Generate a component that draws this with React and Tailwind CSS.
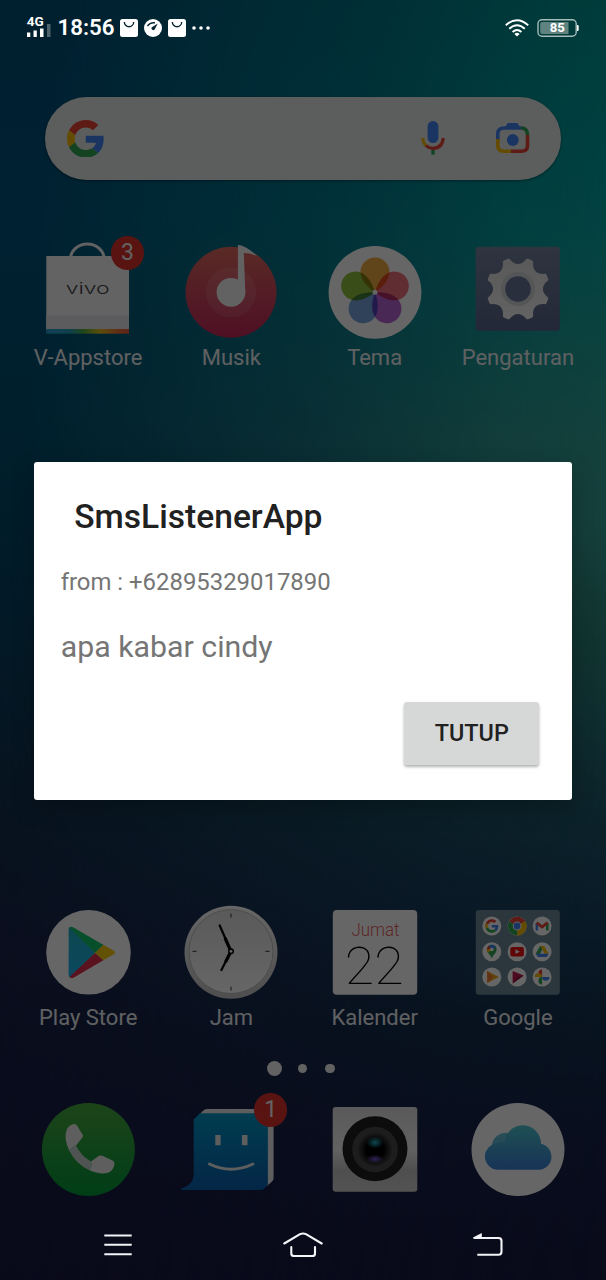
import React from "react";

const G_PARTS = [
  ["#EA4335", "M24 9.5c3.54 0 6.71 1.22 9.21 3.6l6.85-6.85C35.9 2.38 30.47 0 24 0 14.62 0 6.51 5.38 2.56 13.22l7.98 6.19C12.43 13.72 17.74 9.5 24 9.5z"],
  ["#4285F4", "M46.98 24.55c0-1.57-.15-3.09-.38-4.55H24v9.02h12.94c-.58 2.96-2.26 5.48-4.78 7.18l7.73 6c4.51-4.18 7.09-10.36 7.09-17.65z"],
  ["#FBBC05", "M10.53 28.59c-.48-1.45-.76-2.99-.76-4.59s.27-3.14.76-4.59l-7.98-6.19C.92 16.46 0 20.12 0 24c0 3.88.92 7.54 2.56 10.78l7.97-6.19z"],
  ["#34A853", "M24 48c6.48 0 11.93-2.13 15.89-5.81l-7.73-6c-2.15 1.45-4.92 2.3-8.16 2.3-6.26 0-11.57-4.22-13.47-9.91l-7.98 6.19C6.51 42.62 14.62 48 24 48z"],
];

const GMark = () => G_PARTS.map(([fill, d]) => <path key={fill} fill={fill} d={d} />);

function Gradient({ id, from, to }) {
  return (
    <linearGradient id={id} x1="0" y1="0" x2="0" y2="1">
      <stop offset="0" stopColor={from} />
      <stop offset="1" stopColor={to} />
    </linearGradient>
  );
}

// Eight teeth joined by concave valleys.
function gearPath(radius, valley) {
  const at = (r, deg) => {
    const a = (deg * Math.PI) / 180;
    return `${(r * Math.sin(a)).toFixed(2)} ${(-r * Math.cos(a)).toFixed(2)}`;
  };
  let d = "";
  for (let k = 0; k < 8; k++) {
    const t = 22.5 + 45 * k;
    d += `${k ? "L" : "M"}${at(radius - 1, t - 7)} Q${at(radius, t - 6)} ${at(radius, t - 4)} L${at(radius, t + 4)} Q${at(radius, t + 6)} ${at(radius - 1, t + 7)} C${at(valley, t + 14)} ${at(valley, t + 31)} ${at(radius - 1, t + 38)} `;
  }
  return d + "Z";
}

function StoreIcon() {
  return (
    <>
      <defs>
        <linearGradient id="rainbow">
          <stop offset="0" stopColor="#2aa0d8" />
          <stop offset="0.3" stopColor="#2aa0b8" />
          <stop offset="0.45" stopColor="#50b040" />
          <stop offset="0.65" stopColor="#e8c020" />
          <stop offset="0.85" stopColor="#f07838" />
          <stop offset="1" stopColor="#e85838" />
        </linearGradient>
      </defs>
      <path d="M-17.5 -31a16.8 15 0 0 1 33.6 0" fill="none" stroke="#f4f4f4" strokeWidth="3" />
      <rect x="-41.7" y="-34" width="82.7" height="74" fill="#f8f8fa" />
      <rect x="-41.7" y="25.5" width="82.7" height="14" fill="#e6e6ea" />
      <rect x="-41.7" y="39" width="82.7" height="4.7" fill="url(#rainbow)" />
      <text x="-22.3" y="4" fontSize="16.5" textLength="44" lengthAdjust="spacingAndGlyphs" fill="#444" className="font-[Inter,sans-serif] font-light">vivo</text>
    </>
  );
}

function MusicIcon() {
  return (
    <>
      <defs><Gradient id="music" from="#e06a60" to="#c4285a" /></defs>
      <circle cy="2.3" r="45.5" fill="url(#music)" />
      <circle cy="2.3" r="25" fill="#fff" fillOpacity="0.1" />
      <circle cy="2.3" r="14.4" fill="#f6f6f6" />
      <path d="M6.9 -45.3Q16 -44 26.6 -33.5Q19 -37.5 12.8 -37L14.3 2.3H6.9Z" fill="#f6f6f6" />
    </>
  );
}

function ThemeIcon() {
  const petals = ["#f2a533", "#ee6472", "#b458d4", "#6c9ee0", "#83bb2c"];
  return (
    <>
      <circle cy="2.3" r="46.4" fill="#fff" />
      <g transform="translate(0 2.3)">
        {petals.map((c, i) => (
          <path key={c} className="mix-blend-multiply" transform={`rotate(${i * 72})`} fill={c} fillOpacity="0.92"
            d="M0 0C-6.5 -4 -14.5 -12 -14.5 -20.3A14.5 14.5 0 0 1 14.5 -20.3C14.5 -12 6.5 -4 0 0Z" />
        ))}
        <circle r="2.5" fill="#fff" />
      </g>
    </>
  );
}

function GearIcon() {
  return (
    <>
      <defs>
        <Gradient id="gearBg" from="#76849f" to="#58658c" />
        <Gradient id="gearFg" from="#e0e0e2" to="#f6f6f6" />
      </defs>
      <rect x="-42.2" y="-43.3" width="84" height="84" rx="2.5" fill="url(#gearBg)" />
      <g transform="translate(0 -1)">
        <path d={gearPath(31.8, 23.6)} fill="url(#gearFg)" />
        <circle r="17" fill="#d2d4d8" />
        <circle r="12.8" fill="#67759a" />
      </g>
    </>
  );
}

function PlayIcon() {
  return (
    <>
      <defs><Gradient id="playBlue" from="#20b0c4" to="#20b4f0" /></defs>
      <circle cx="0.5" cy="2.3" r="42.3" fill="#fff" />
      <path d="M-19.4 -20.5Q-19 -24 -16 -22.5L7 3L-16 27.5Q-19.4 28 -19.4 25Z" fill="url(#playBlue)" />
      <path d="M-18.5 -22.5Q-17 -23.8 -14.5 -22.5L15.5 -5L7 3Z" fill="#12c46c" />
      <path d="M15.3 -5.2L26.3 1Q28 2.5 26.3 4L15.3 10.3L7 3Z" fill="#f8ca10" />
      <path d="M7 3L15.3 10.3L-14.5 27.8Q-17 28.8 -18.5 27Z" fill="#e0304c" />
    </>
  );
}

function ClockIcon() {
  return (
    <>
      <defs><Gradient id="clock" from="#e0e0e0" to="#ffffff" /><Gradient id="rim" from="#ffffff" to="#c4c4c4" /></defs>
      <circle cy="2.3" r="46.5" fill="url(#rim)" />
      <circle cy="1.5" r="42" fill="url(#clock)" stroke="#b4b4b4" strokeWidth="0.8" />
      <path d="M0 -36.5v4M0 36.5v4M-38.5 1.3h4M34.5 1.3h4" stroke="#555" strokeWidth="1.2" />
      <path d="M-11.3 -24.5L0 1.3L-9.6 20" fill="none" stroke="#000" strokeWidth="2.2" strokeLinecap="round" strokeLinejoin="round" />
      <path d="M-6 -12L0 1.3L-5.5 12" fill="none" stroke="#000" strokeWidth="3.2" strokeLinejoin="round" />
      <circle cy="1.3" r="3" fill="#000" />
      <circle cy="1.3" r="1.4" fill="#fff" />
    </>
  );
}

function CalendarIcon() {
  return (
    <>
      <rect x="-42.2" y="-40" width="84.4" height="84.7" rx="4" fill="#fff" />
      <text x="-23.5" y="-13.7" fontSize="19" textLength="48" lengthAdjust="spacingAndGlyphs" fill="#e8605c" className="font-light">Jumat</text>
      <text x="-30.2" y="33.6" fontSize="51" textLength="59" lengthAdjust="spacingAndGlyphs" fill="#000" className="font-thin">22</text>
    </>
  );
}

function FolderIcon() {
  const xs = [-26.2, -0.9, 24.1];
  const ys = [-24, 1.7, 27];
  const minis = [
    <g transform="translate(-6.7 -6.7) scale(0.28)"><GMark /></g>,
    <>
      <path d="M0 0L-8 -4.7A9.4 9.4 0 0 1 8.2 -4.7Z" fill="#ea4335" />
      <path d="M0 0L8.2 -4.7A9.4 9.4 0 0 1 0 9.4Z" fill="#fbbc05" />
      <path d="M0 0L0 9.4A9.4 9.4 0 0 1 -8 -4.7Z" fill="#34a853" />
      <circle r="4.4" fill="#fff" /><circle r="3.4" fill="#4285f4" />
    </>,
    <>
      <path d="M-5.2 4.5V-3" stroke="#4285f4" strokeWidth="2.6" />
      <path d="M5.2 4.5V-3" stroke="#34a853" strokeWidth="2.6" />
      <path d="M-5.4 -3.4L0 1L5.4 -3.4" fill="none" stroke="#ea4335" strokeWidth="2.8" />
    </>,
    <>
      <path d="M0 7C-1 3 -4.8 1.5 -4.8 -2.2A4.8 4.8 0 0 1 4.8 -2.2C4.8 1.5 1 3 0 7Z" fill="#34a853" />
      <path d="M-3.8 1A4.8 4.8 0 0 1 -3.6 -5.2L0 -2Z" fill="#fbbc05" />
      <path d="M-3.6 -5.3A4.8 4.8 0 0 1 4.2 -4.6L0 -1.5Z" fill="#4285f4" />
      <path d="M-4.7 -2A4.8 4.8 0 0 1 -3 -6L-1 -3Z" fill="#ea4335" />
      <circle cy="-2.2" r="1.8" fill="#fff" />
    </>,
    <><rect x="-6.8" y="-4.7" width="13.6" height="9.4" rx="2" fill="#f01010" /><path d="M-1.6 -2.4L2.6 0L-1.6 2.4Z" fill="#fff" /></>,
    <>
      <path d="M-2 -5.6H2L-3.4 4.8L-6.4 2Z" fill="#34a853" />
      <path d="M-1.8 -5.6H2L6.6 2H2.6Z" fill="#fbbc05" />
      <path d="M-6.4 2H6.6L4.6 5.2H-4.2Z" fill="#4285f4" />
    </>,
    <><path d="M-4.5 -6L7 0L-4.5 6Z" fill="#f5a820" /><path d="M-4.5 -6L1 0L-4.5 6Z" fill="#f07830" /></>,
    <><path d="M-4.5 -6L6.5 -1.5L-4.5 6.5Z" fill="#c01850" /><path d="M-4.5 6.5L1 0L6.5 -1.5Z" fill="#8a1040" /></>,
    <>
      <path d="M0 0V-7.4A3.7 3.7 0 0 1 0 0Z" transform="scale(-1 1)" fill="#ea4335" />
      <path d="M0 0H7.4A3.7 3.7 0 0 1 0 0Z" fill="#4285f4" />
      <path d="M0 0V-7.4A3.7 3.7 0 0 0 0 0Z" transform="scale(1 -1)" fill="#34a853" />
      <path d="M0 0H-7.4A3.7 3.7 0 0 1 0 0Z" fill="#fbbc05" />
    </>,
  ];
  return (
    <>
      <rect x="-42.2" y="-40" width="84" height="84.7" rx="3" fill="#6c8a98" />
      {minis.map((m, i) => (
        <g key={i} transform={`translate(${xs[i % 3]} ${ys[Math.floor(i / 3)]})`}>
          <circle r="9.5" fill="#fff" />
          {m}
        </g>
      ))}
    </>
  );
}

function PhoneIcon() {
  return (
    <>
      <defs><Gradient id="phone" from="#4bab40" to="#009a3a" /></defs>
      <circle cx="0.4" cy="-0.5" r="46.5" fill="url(#phone)" />
      <path d="M-13.5 -26Q-12 -26 -11 -24.5L-5.2 -15Q-4.5 -13.5 -6 -12L-12 -4.5Q-17 -3 -18.5 1Q-25 -12 -21 -21Q-18.5 -25.5 -13.5 -26Z" fill="#ececec" />
      <path d="M3 11.5L11 5.8Q13 5 15 6L24.5 10.5Q27 12 26.3 15Q25 21.5 19 23Q11 24.5 1 20Q4.5 17 3 11.5Z" fill="#ececec" />
      <path d="M-18.5 1Q-12 14 1 20Q4.5 17 3 11.5Q-7 6 -12 -4.5Q-17 -3 -18.5 1Z" fill="#c6d0cb" />
    </>
  );
}

function MessageIcon() {
  return (
    <>
      <defs><Gradient id="msg" from="#0098c8" to="#0b60b0" /></defs>
      <path d="M-24 -41H38Q42.6 -41 42.6 -36V28Q42.6 30 41 31.5L36 36V-36H-31Q-27 -41 -24 -41Z" fill="#ececec" />
      <path d="M-31 -36.7H36.9V35L31.5 40H-49.8V38.6Q-37.3 35 -37.3 24V-30.5Z" fill="url(#msg)" />
      <path d="M-15.7 -15h5.3v10.3h-5.3zM10.9 -15h5.6v10.3h-5.6z" fill="#ececec" />
      <path d="M-21.5 14Q0 24.5 22 14" fill="none" stroke="#ececec" strokeWidth="3" strokeLinecap="round" />
    </>
  );
}

function CameraIcon() {
  return (
    <>
      <defs>
        <linearGradient id="cam" x1="0" y1="0" x2="0" y2="1">
          <stop offset="0" stopColor="#e0e0e0" />
          <stop offset="0.5" stopColor="#f4f4f4" />
          <stop offset="0.75" stopColor="#c4c4c4" />
          <stop offset="1" stopColor="#d0d0d0" />
        </linearGradient>
        <radialGradient id="teal"><stop offset="0" stopColor="#28b8d0" /><stop offset="1" stopColor="#28b8d0" stopOpacity="0" /></radialGradient>
        <radialGradient id="violet"><stop offset="0" stopColor="#7a58d8" /><stop offset="1" stopColor="#7a58d8" stopOpacity="0" /></radialGradient>
        <radialGradient id="lens"><stop offset="0.5" stopColor="#000" /><stop offset="1" stopColor="#484848" /></radialGradient>
      </defs>
      <rect x="-42.3" y="-43" width="84.6" height="84.7" rx="3" fill="url(#cam)" />
      <circle cy="-1.3" r="32.5" fill="#1e1e1e" />
      <circle cy="-0.5" r="22.8" fill="#4a4a4a" />
      <circle cy="-0.5" r="17.5" fill="url(#lens)" />
      <ellipse cy="-7.5" rx="8.5" ry="6" fill="url(#teal)" />
      <ellipse cy="9" rx="8.5" ry="4.5" fill="url(#violet)" />
    </>
  );
}

function CloudIcon() {
  return (
    <>
      <defs>
        <linearGradient id="cloud" gradientUnits="userSpaceOnUse" x1="0" y1="-23" x2="0" y2="20">
          <stop offset="0" stopColor="#4cc4d0" />
          <stop offset="1" stopColor="#3c80d8" />
        </linearGradient>
      </defs>
      <circle cy="-0.5" r="46.5" fill="#fff" />
      <path d="M-21 19.8A13.3 13.3 0 0 1 -26 -5.2A13.8 13.8 0 0 1 -10 -17A18.2 18.2 0 0 1 23 -6.3A13.2 13.2 0 0 1 21 19.8Z" fill="url(#cloud)" />
      <path d="M-26 -5.2A13.8 13.8 0 0 1 -10 -17Q-13 -13 -13 -8Q-20 -8 -26 -5.2Z" fill="#fff" fillOpacity="0.14" />
    </>
  );
}

function AppTile({ icon: Icon, label, badge }) {
  return (
    <div className="relative flex flex-1 flex-col items-center">
      <svg width="100" height="110" viewBox="-50 -55 100 110" className="isolate overflow-visible">
        <Icon />
      </svg>
      {label && <span className="-mt-[1px] -mb-[1px] text-[22px] leading-7 whitespace-nowrap text-[#eef1f4]">{label}</span>}
      {badge && <Badge {...badge} />}
    </div>
  );
}

function Badge({ text, className }) {
  return (
    <span className={`absolute left-[94.3px] flex size-[33.4px] items-center justify-center rounded-full bg-[#de332e] text-[23px] leading-none text-[#f4f4f4] ${className}`}>
      {text}
    </span>
  );
}

function SearchBar() {
  return (
    <div className="mx-[45.3px] flex h-[82.5px] items-center rounded-full bg-[#e6ebea] pl-[21.5px] shadow-[0_1px_3px_rgba(0,0,0,0.4)]">
      <svg width="37.5" height="37.5" viewBox="0 0 48 48"><GMark /></svg>
      <svg width="36" height="36" viewBox="-18 -18 36 36" className="ml-auto">
        <rect x="-5.4" y="-17" width="10.8" height="22" rx="5.4" fill="#4285f4" />
        <path d="M0 10V16.7" stroke="#34a853" strokeWidth="3.4" />
        <path d="M-10.3 0Q-10 5.5 -6.5 8" fill="none" stroke="#fbbc05" strokeWidth="3.2" />
        <path d="M-7 7.6Q-4 10.3 0 10.3Q9.3 10 10.3 0" fill="none" stroke="#ea4335" strokeWidth="3.2" />
      </svg>
      <svg width="36" height="36" viewBox="-18 -18 36 36" className="mr-[29.5px] ml-[44.7px]" fill="none" strokeWidth="3.6">
        <path d="M-15.2 2V-4Q-15.2 -10 -9 -10H8" stroke="#4285f4" />
        <path d="M-8 -10L-5.5 -15H4.5L7.5 -10Z" fill="#4285f4" />
        <path d="M8 -10Q14.5 -10 14.5 -3" stroke="#34a853" />
        <path d="M14.5 -3V7.5Q14.5 13.3 8.5 13.3H-2" stroke="#ea4335" />
        <path d="M-2 13.3H-9Q-15.2 13.3 -15.2 7.5V1" stroke="#fbbc05" />
        <circle cx="-0.2" cy="2" r="5.9" fill="#4285f4" />
      </svg>
    </div>
  );
}

const BagGlyph = () => (
  <svg width="18" height="18" viewBox="0 0 18 18">
    <rect width="18" height="18" rx="2.5" fill="#fff" />
    <path d="M4.3 3A4.7 4.7 0 0 0 13.7 3" fill="none" stroke="#0a2634" strokeWidth="1.4" />
  </svg>
);

function StatusBar() {
  return (
    <div className="flex h-[55px] items-center pr-[27px] pl-[26px] text-white">
      <svg width="26" height="24" viewBox="0 0 26 24" fill="#fff">
        <text x="0.8" y="10" fontSize="12" textLength="17" lengthAdjust="spacingAndGlyphs" className="font-bold">4G</text>
        <path d="M1 16.5h3.3V21H1zM7.5 14.5h3.3V21H7.5zM14 12.5h3.5V21H14z" />
        <path d="M21 8h3.5v13H21z" fillOpacity="0.3" />
      </svg>
      <span className="ml-[5.5px] w-[56.5px] text-[22.3px] leading-none font-semibold">18:56</span>
      <div className="ml-[6px] flex items-center gap-[6px]">
        <BagGlyph />
        <svg width="18" height="18" viewBox="0 0 18 18">
          <circle cx="9" cy="9" r="9" fill="#fff" />
          <path d="M3.5 7Q6 3.2 11 3.8" fill="none" stroke="#0a2634" strokeWidth="1.4" />
          <path d="M13.8 4.5L10.5 10.8A2 2 0 0 1 7.5 8.6Z" fill="#0a2634" />
        </svg>
        <BagGlyph />
        <svg width="18" height="4" viewBox="0 0 18 4" fill="#fff">
          <circle cx="2" cy="2" r="1.8" /><circle cx="9" cy="2" r="1.8" /><circle cx="16" cy="2" r="1.8" />
        </svg>
      </div>
      <svg width="24" height="18" viewBox="0 0 24 18" className="ml-auto" fill="none" stroke="#fff" strokeWidth="1.9">
        <path d="M0.8 6.2Q12 -3.8 23.2 6.2M4.2 9.8Q12 2.8 19.8 9.8M7.6 13Q12 8.8 16.4 13" />
        <path d="M9.4 15L12 17.4L14.6 15Q12 12.6 9.4 15Z" fill="#fff" stroke="none" />
      </svg>
      <svg width="42" height="18" viewBox="0 0 42 18" className="ml-[8px]">
        <rect x="1" y="0.8" width="38.2" height="16.4" rx="4" fill="none" stroke="#a3bdba" strokeWidth="1.4" />
        <path d="M5 3H31.5V15H5Q3.2 15 3.2 13V5Q3.2 3 5 3Z" fill="#5f8480" />
        <path d="M40 6h.5q1.2 0 1.2 1v4q0 1-1.2 1H40z" fill="#fff" />
        <text x="12.7" y="13.4" fontSize="12.5" textLength="15" lengthAdjust="spacingAndGlyphs" fill="#fff" className="font-bold">85</text>
      </svg>
    </div>
  );
}

function Dialog() {
  return (
    <section className="mx-[33.7px] mt-[407px] flex h-[338px] flex-col rounded-[3px] bg-white pr-[33px] pl-[27px] shadow-[0_8px_22px_rgba(0,0,0,0.25)]">
      <h1 className="mt-[34px] ml-[13.5px] text-[33.6px] leading-[42px] font-medium text-[#212121]">SmsListenerApp</h1>
      <p className="mt-[29px] text-[23.9px] leading-[30px] text-[#757575]">from : +62895329017890</p>
      <p className="mt-[31px] text-[30.3px] leading-[38px] text-[#757575]">apa kabar cindy</p>
      <button className="mt-[36px] h-[63px] w-[135px] self-end rounded-[3px] bg-[#d6d8d7] text-[23.4px] leading-none font-medium text-[#212121] shadow-[0_2px_3px_rgba(0,0,0,0.3)]">
        TUTUP
      </button>
    </section>
  );
}

function NavBar() {
  return (
    <div className="mt-auto flex h-[70px] items-center pr-[103.5px] pl-[104.3px]">
      <svg width="28" height="24" viewBox="0 0 28 24" stroke="#f4f4f8" strokeWidth="2">
        <path d="M0.3 2.4h27.4M0.3 11.8h27.4M0.3 21.2h27.4" />
      </svg>
      <svg width="40" height="26" viewBox="0 0 40 26" fill="none" stroke="#f4f4f8" strokeWidth="2.1" strokeLinecap="round" strokeLinejoin="round" className="mb-[2px] ml-[151px]">
        <path d="M1.3 12.5L17 3.1Q20 1.8 23 3.1L38.7 12.5M8.3 16V22.5Q8.3 25 11 25H29.5Q32 25 32 22.5V16" />
      </svg>
      <svg width="30" height="24" viewBox="0 0 30 24" fill="none" stroke="#f4f4f8" strokeWidth="2.1" className="ml-auto">
        <path d="M1 5H25.5Q28.5 5 28.5 8V18.8Q28.5 21.8 25.5 21.8H4.3" />
        <path d="M0 4.6L8.8 0V5.6H0Z" fill="#f4f4f8" stroke="none" />
      </svg>
    </div>
  );
}

// Blue-to-navy on the left, with a teal-to-navy copy fading in from the right.
function Wallpaper() {
  return (
    <div className="absolute inset-0 bg-[linear-gradient(180deg,#005078_0%,#01547c_17%,#014e70_33%,#083f5e_50%,#12304e_62%,#1a234a_74%,#171941_100%)]">
      <div className="h-full bg-[linear-gradient(180deg,#00a096_0%,#00aaa5_12%,#08afa7_18%,#21ada0_27%,#37aa9b_34%,#39a599_41%,#2f8a7c_49%,#287578_56%,#1e5a6b_63%,#194664_71%,#143250_80%,#17254c_88%,#171941_100%)] [mask-image:linear-gradient(95deg,transparent_8%,rgba(0,0,0,0.42)_48%,rgba(0,0,0,0.8)_75%,black_100%)]" />
    </div>
  );
}

export default function App() {
  return (
    <main className="relative h-[1280px] w-[606px] overflow-hidden font-[Roboto,sans-serif]">
      <Wallpaper />
      <div className="relative pt-[97px]">
        <SearchBar />
        <div className="mx-[16.5px] mt-[55.5px] flex">
          <AppTile icon={StoreIcon} label="V-Appstore" badge={{ text: "3", className: "top-[1.2px]" }} />
          <AppTile icon={MusicIcon} label="Musik" />
          <AppTile icon={ThemeIcon} label="Tema" />
          <AppTile icon={GearIcon} label="Pengaturan" />
        </div>
        <div className="mx-[16.5px] mt-[524px] flex">
          <AppTile icon={PlayIcon} label="Play Store" />
          <AppTile icon={ClockIcon} label="Jam" />
          <AppTile icon={CalendarIcon} label="Kalender" />
          <AppTile icon={FolderIcon} label="Google" />
        </div>
        <div className="mt-[30px] flex h-[15px] items-center gap-[18px] pl-[267px]">
          <span className="size-[15px] rounded-full bg-[#f4f4f4]" />
          <span className="-ml-[2.5px] size-[9.5px] rounded-full bg-[#f4f4f4]" />
          <span className="size-[9.5px] rounded-full bg-[#f4f4f4]" />
        </div>
        <div className="mx-[16.5px] mt-[19px] flex">
          <AppTile icon={PhoneIcon} />
          <AppTile icon={MessageIcon} badge={{ text: "1", className: "-top-[1.8px]" }} />
          <AppTile icon={CameraIcon} />
          <AppTile icon={CloudIcon} />
        </div>
      </div>
      <div className="absolute inset-0 flex flex-col bg-black/60">
        <StatusBar />
        <Dialog />
        <NavBar />
      </div>
    </main>
  );
}
